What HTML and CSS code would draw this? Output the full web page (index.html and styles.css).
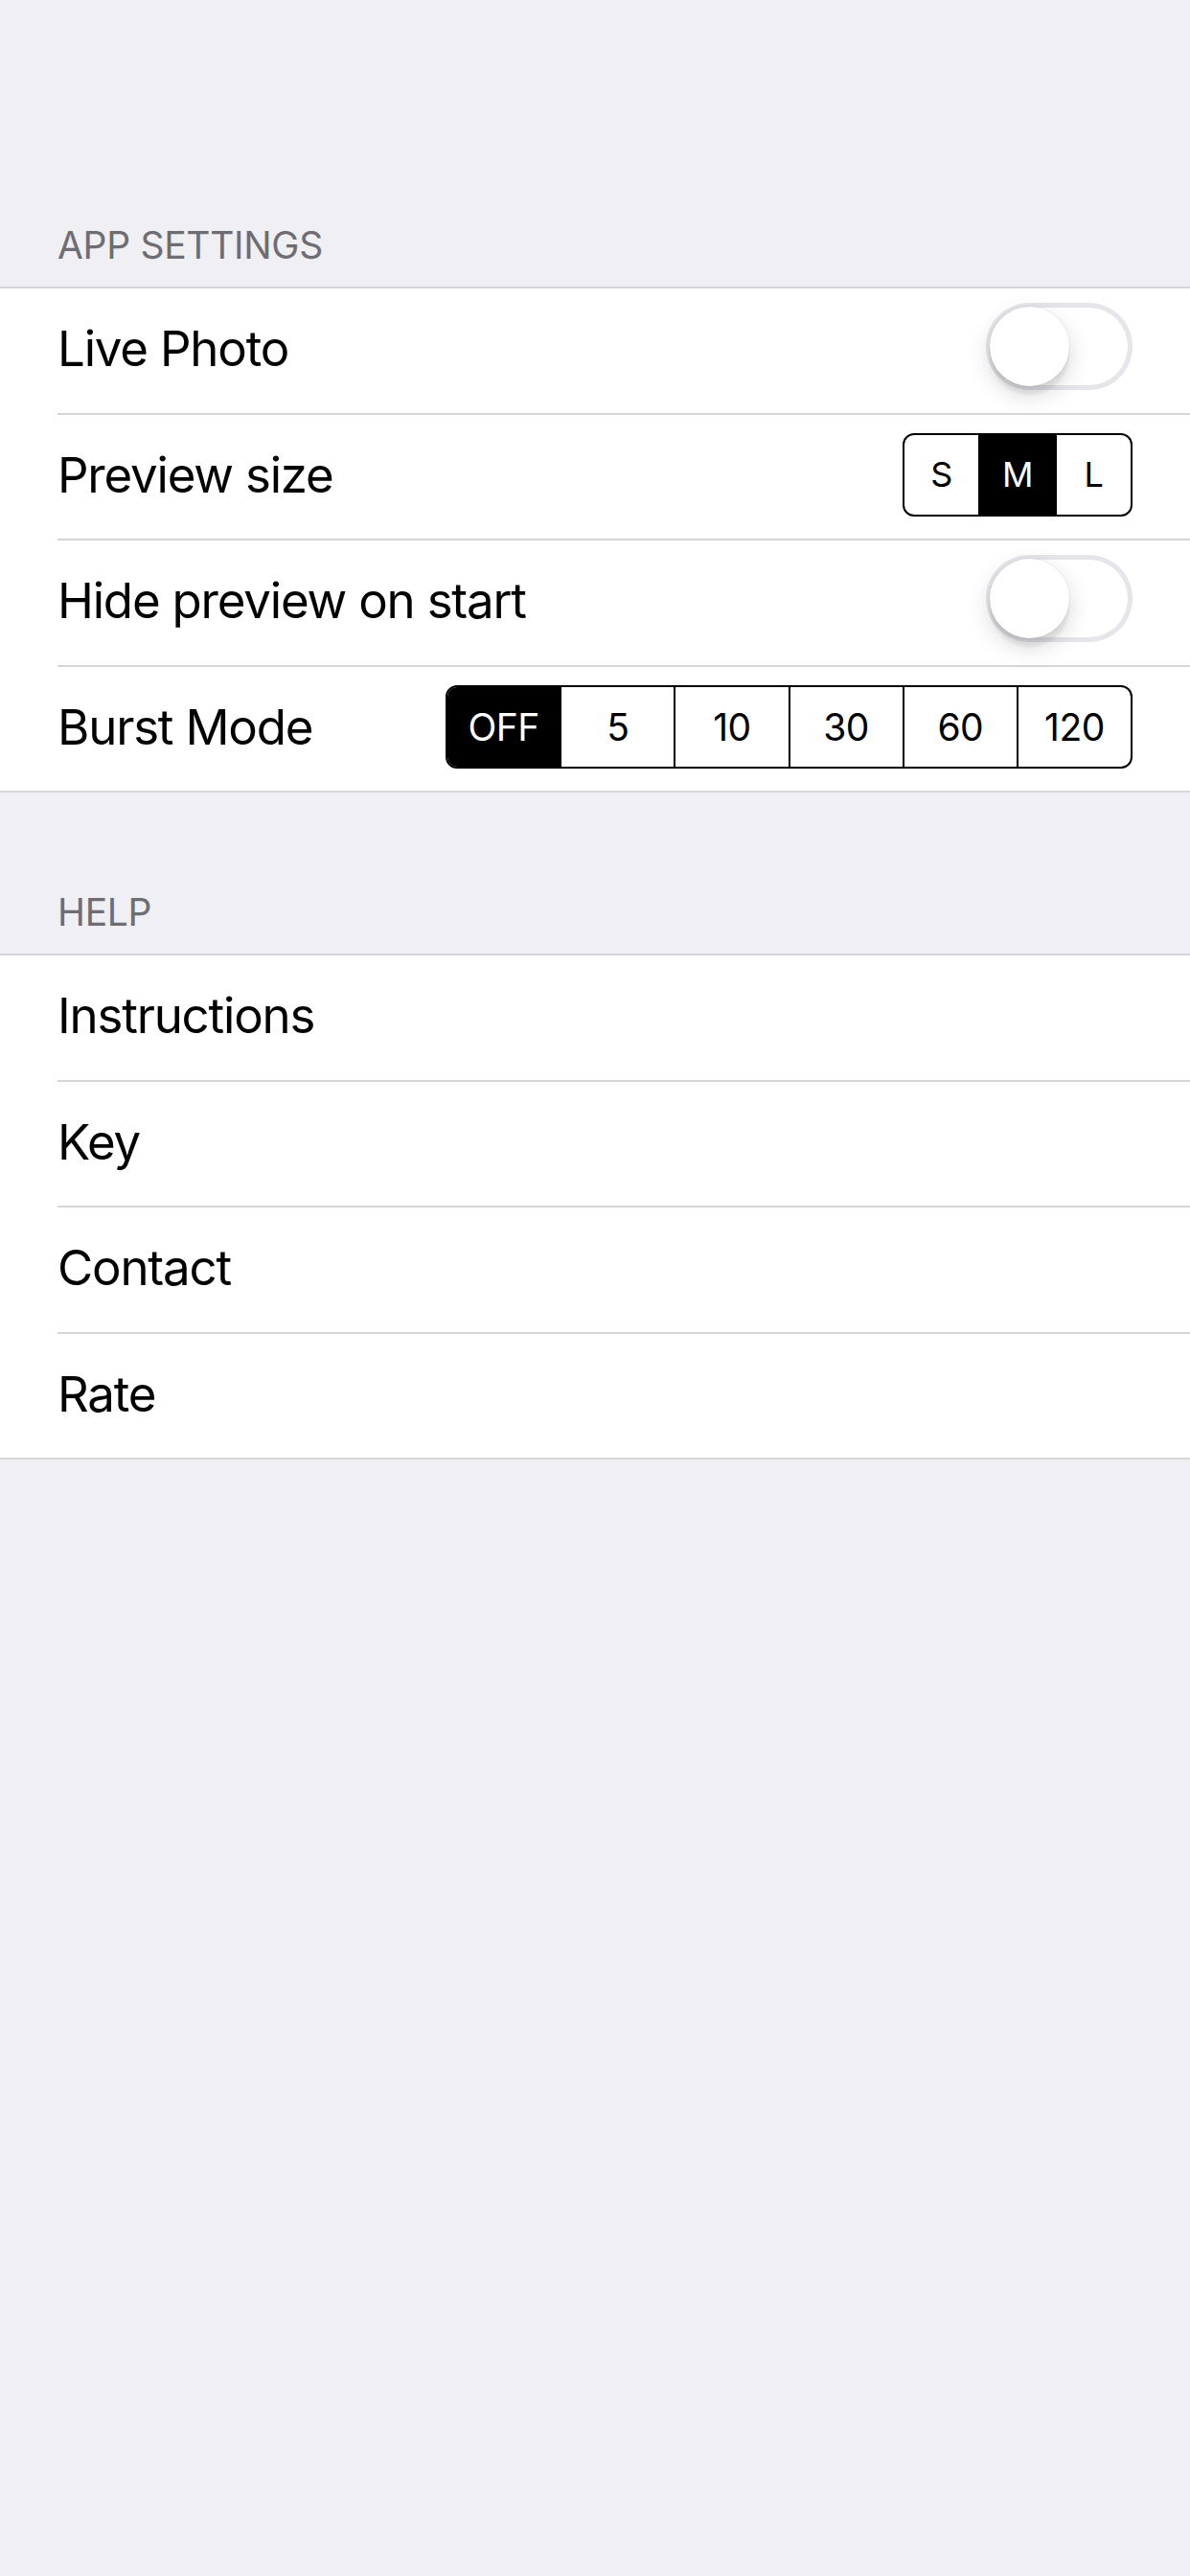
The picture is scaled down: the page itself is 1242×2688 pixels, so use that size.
FILE: index.html
```html
<!DOCTYPE html>
<html lang="en">

<head>
    <meta charset="UTF-8">
    <meta name="viewport" content="width=device-width, initial-scale=1.0">
    <title>Settings</title>
    <link rel="stylesheet" href="styles.css">
</head>

<body>
    <div class="section-header first">APP SETTINGS</div>
    <div class="group">
        <div class="row">
            <div class="row-inner">
                <span class="label">Live Photo</span>
                <span class="switch"><span class="knob"></span></span>
            </div>
        </div>
        <div class="row">
            <div class="row-inner">
                <span class="label">Preview size</span>
                <div class="segmented size">
                    <span class="seg">S</span>
                    <span class="seg active">M</span>
                    <span class="seg">L</span>
                </div>
            </div>
        </div>
        <div class="row">
            <div class="row-inner">
                <span class="label">Hide preview on start</span>
                <span class="switch"><span class="knob"></span></span>
            </div>
        </div>
        <div class="row">
            <div class="row-inner">
                <span class="label">Burst Mode</span>
                <div class="segmented burst">
                    <span class="seg active">OFF</span>
                    <span class="seg">5</span>
                    <span class="seg">10</span>
                    <span class="seg">30</span>
                    <span class="seg">60</span>
                    <span class="seg">120</span>
                </div>
            </div>
        </div>
    </div>

    <div class="section-header">HELP</div>
    <div class="group">
        <div class="row"><div class="row-inner"><span class="label">Instructions</span></div></div>
        <div class="row"><div class="row-inner"><span class="label">Key</span></div></div>
        <div class="row"><div class="row-inner"><span class="label">Contact</span></div></div>
        <div class="row"><div class="row-inner"><span class="label">Rate</span></div></div>
    </div>
</body>

</html>
```

FILE: styles.css
```css
* {
    margin: 0;
    padding: 0;
    box-sizing: border-box;
}

body {
    background: #efeff4;
    font-family: Inter, "Noto Sans", sans-serif;
    color: #000;
    min-height: 2688px;
}

.section-header {
    padding: 0 60px 20px;
    margin-top: 101px;
    font-size: 39px;
    line-height: 47px;
    letter-spacing: -0.3px;
    color: #6d6d72;
}

.section-header.first {
    margin-top: 232px;
}

.group {
    background: #fff;
    border-top: 2px solid #d6d6da;
    border-bottom: 2px solid #d6d6da;
}

.row-inner {
    display: flex;
    align-items: center;
    justify-content: space-between;
    height: 131.5px;
    margin-left: 60px;
    padding-right: 60px;
    padding-bottom: 4px;
    border-bottom: 2px solid #d6d6da;
}

.row:last-child .row-inner {
    height: 129.5px;
    border-bottom: none;
}

.label {
    font-size: 51px;
    letter-spacing: -1.2px;
}

/* ios style switch, off state */
.switch {
    display: flex;
    align-items: center;
    width: 153px;
    height: 91px;
    border-radius: 46px;
    box-shadow: inset 0 0 0 5px #e5e5ea;
    margin-top: -4px;
}

.knob {
    width: 83px;
    height: 83px;
    margin-left: 4px;
    border-radius: 50%;
    background: #fff;
    box-shadow: 0 0 0 1px rgba(0, 0, 0, 0.04), 0 9px 3px rgba(0, 0, 0, 0.06), 0 9px 24px rgba(0, 0, 0, 0.16);
}

.segmented {
    display: flex;
    height: 87px;
    border: 2px solid #000;
    border-radius: 12px;
    overflow: hidden;
}

.segmented.size {
    width: 240px;
}

.segmented.burst {
    width: 717px;
}

.seg {
    flex: 1;
    display: flex;
    align-items: center;
    justify-content: center;
    border-left: 2px solid #000;
    font-size: 39px;
    letter-spacing: -0.5px;
}

.seg:first-child {
    border-left: none;
}

.size .seg {
    font-size: 36px;
}

.seg.active {
    background: #000;
    color: #fff;
}
```
